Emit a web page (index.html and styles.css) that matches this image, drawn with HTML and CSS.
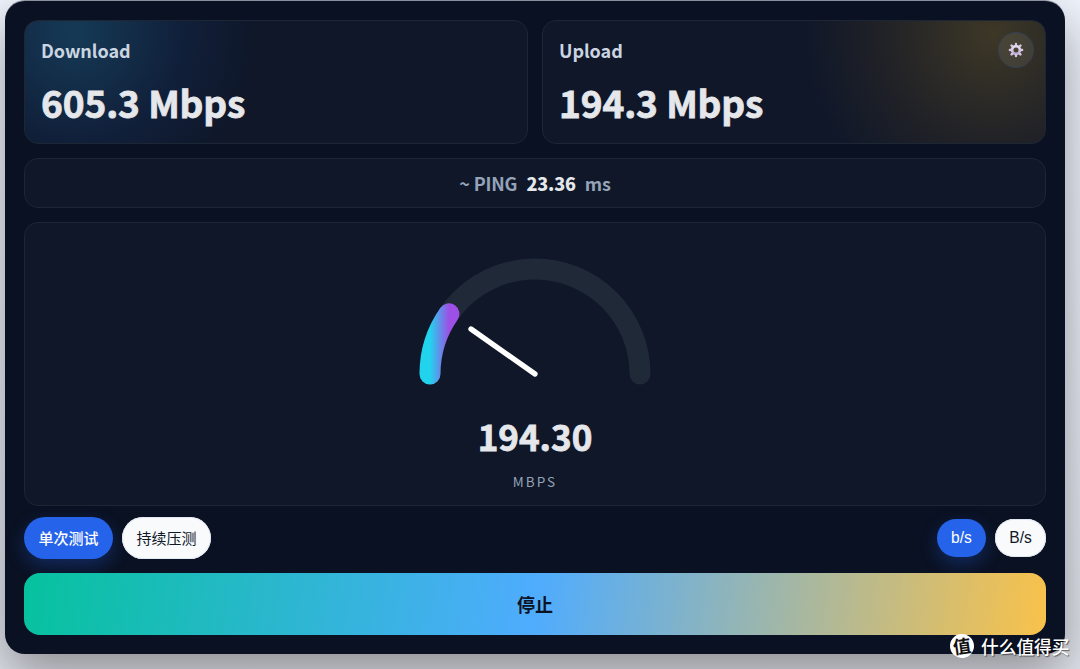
FILE: index.html
```html
<!DOCTYPE html>
<html lang="zh-CN">
<head>
    <meta charset="UTF-8">
    <title>Speed Test</title>
    <link rel="stylesheet" href="styles.css">
</head>
<body>
    <main class="panel">
        <div class="cards">
            <section class="card download">
                <div class="label">Download</div>
                <div class="value">605.3 Mbps</div>
            </section>
            <section class="card upload">
                <div class="label">Upload</div>
                <div class="value">194.3 Mbps</div>
                <button class="settings">
                    <svg width="16" height="16" viewBox="-8 -8 16 16">
                        <defs>
                            <linearGradient id="gear" x1="0" y1="0" x2="0" y2="1">
                                <stop offset="0" stop-color="#e8def0"/>
                                <stop offset="1" stop-color="#bba9d2"/>
                            </linearGradient>
                        </defs>
                        <circle r="3.9" fill="none" stroke="url(#gear)" stroke-width="2.8"/>
                        <g stroke="#d5c8e2" stroke-width="2.3" stroke-linecap="round">
                            <path d="M0 -5.2V-6.2M0 5.2V6.2M-5.2 0H-6.2M5.2 0H6.2"/>
                            <path d="M-3.9 -3.9L-4.5 -4.5M3.9 -3.9L4.5 -4.5M-3.9 3.9L-4.5 4.5M3.9 3.9L4.5 4.5"/>
                        </g>
                    </svg>
                </button>
            </section>
        </div>

        <div class="ping"><span>~ PING</span><b>23.36</b><span>ms</span></div>

        <section class="gauge">
            <svg width="250" height="140" viewBox="0 0 250 140">
                <defs>
                    <linearGradient id="speed">
                        <stop offset="0" stop-color="#22d3ee"/>
                        <stop offset="1" stop-color="#9d50e5"/>
                    </linearGradient>
                </defs>
                <path class="track" d="M20 126A105 105 0 0 1 230 126"/>
                <path class="progress" d="M20 126A105 105 0 0 1 39 65.8"/>
                <path class="needle" d="M125 126L61 81"/>
            </svg>
            <div class="speed">194.30</div>
            <div class="unit">MBPS</div>
        </section>

        <div class="controls">
            <div class="modes">
                <button class="pill active">单次测试</button>
                <button class="pill">持续压测</button>
            </div>
            <div class="units">
                <button class="pill active">b/s</button>
                <button class="pill">B/s</button>
            </div>
        </div>

        <button class="stop">停止</button>
    </main>

    <div class="watermark"><span class="badge">值</span><span>什么值得买</span></div>
</body>
</html>
```

FILE: styles.css
```css
* {
    box-sizing: border-box;
}

body {
    margin: 0;
    height: 669px;
    overflow: hidden;
    padding: 1px 15px 15px 5px;
    background: linear-gradient(#eff3fc, #e2e5ed);
    font-family: "Noto Sans CJK SC", sans-serif;
    color: #e5e7eb;
}

button {
    font-family: inherit;
    padding: 0;
    border: 0;
}

.panel {
    height: 653px;
    padding: 19px 19px 20px;
    border-radius: 20px;
    background: #0a1122;
    box-shadow: 0 -1px 0 rgba(15, 23, 42, 0.4), 0 20px 50px rgba(0, 0, 0, 0.38);
}

.cards {
    display: grid;
    grid-template-columns: 1fr 1fr;
    gap: 14px;
}

.card,
.ping,
.gauge {
    border: 1px solid #1c2634;
    border-radius: 14px;
    background-color: #0f1729;
}

.card {
    position: relative;
    height: 124px;
    padding: 15px 16px;
}

.download {
    background-image: radial-gradient(180px 180px at 50px 12px, rgba(34, 132, 180, 0.32), rgba(24, 72, 140, 0.17) 60%, transparent);
}

.upload {
    background-image: radial-gradient(190px 190px at 450px 12px, rgba(180, 138, 30, 0.28), rgba(110, 80, 30, 0.18) 60%, transparent);
}

.label {
    font-size: 18px;
    font-weight: 700;
    line-height: 28px;
    letter-spacing: -0.05px;
    color: #cbd5e1;
}

.value {
    margin-top: 10px;
    font-size: 37px;
    font-weight: 700;
    line-height: 56px;
    letter-spacing: -0.1px;
    -webkit-text-stroke: 0.8px #e5e7eb;
}

.settings {
    position: absolute;
    top: 11px;
    right: 11px;
    width: 36px;
    height: 36px;
    display: flex;
    align-items: center;
    justify-content: center;
    border: 1px solid #334155;
    border-radius: 50%;
    background: rgba(255, 255, 255, 0.08);
}

.ping {
    display: flex;
    align-items: center;
    justify-content: center;
    gap: 9px;
    height: 50px;
    margin-top: 14px;
    font-size: 18px;
    font-weight: 700;
    letter-spacing: -0.15px;
    color: #94a3b8;
}

.ping b {
    color: #e5e7eb;
}

.gauge {
    display: flex;
    flex-direction: column;
    align-items: center;
    height: 284px;
    margin-top: 14px;
    padding-top: 25px;
}

.gauge path {
    fill: none;
    stroke-linecap: round;
    stroke-width: 21;
}

.gauge .track {
    stroke: #1f2937;
}

.gauge .progress {
    stroke: url(#speed);
}

.gauge .needle {
    stroke: #fff;
    stroke-width: 5.3;
}

.speed {
    margin-top: 20px;
    font-size: 35px;
    font-weight: 700;
    line-height: 56px;
    -webkit-text-stroke: 0.8px #e5e7eb;
}

.unit {
    margin-top: 7px;
    font-size: 13.5px;
    line-height: 20px;
    letter-spacing: 2px;
    color: #94a3b8;
}

.controls {
    display: flex;
    align-items: center;
    justify-content: space-between;
    margin-top: 11px;
}

.modes,
.units {
    display: flex;
    gap: 9px;
}

.pill {
    width: 89px;
    height: 42px;
    padding-bottom: 1px;
    border-radius: 21px;
    background: #f8fafc;
    color: #111827;
    font-size: 15px;
    font-weight: 400;
    box-shadow: inset 0 0 0 1px #e2e8f0;
}

.units .pill {
    width: 51px;
    height: 38px;
    border-radius: 19px;
    font-family: "Liberation Sans", sans-serif;
    font-size: 15.6px;
}

.pill.active {
    background: #2563eb;
    color: #fff;
    font-weight: 500;
    box-shadow: 0 7px 18px rgba(37, 99, 235, 0.3);
}

.units .pill.active {
    width: 49px;
    font-weight: 400;
}

.stop {
    position: relative;
    width: 100%;
    height: 62px;
    margin-top: 14px;
    padding-bottom: 1px;
    border-radius: 16px;
    background: linear-gradient(97deg, #06c29e, #4facfe 50%, #f9c24a);
    color: #0b1222;
    font-size: 18px;
    font-weight: 700;
}

.watermark {
    position: absolute;
    left: 950px;
    top: 634px;
    display: flex;
    align-items: center;
    gap: 7px;
    font-size: 17.7px;
    font-weight: 500;
    line-height: 24px;
    color: #fff;
    text-shadow: 1px 1px 1px rgba(0, 0, 0, 0.5);
    white-space: nowrap;
}

.badge {
    width: 24px;
    height: 24px;
    border-radius: 50%;
    background: #fff;
    color: #111;
    font-size: 18px;
    font-weight: 700;
    line-height: 23px;
    text-align: center;
    text-shadow: none;
    transform: rotate(-8deg);
}
```
